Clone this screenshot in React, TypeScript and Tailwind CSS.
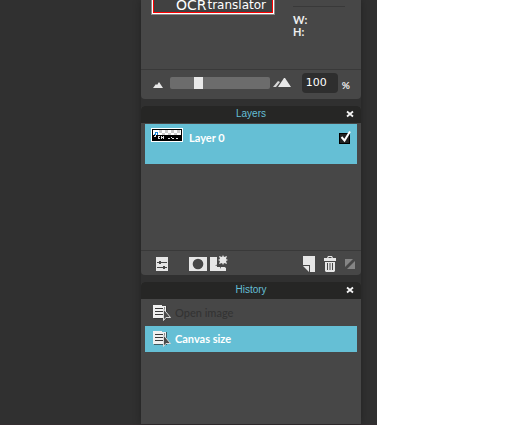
import { useState } from "react";
import type { ReactNode } from "react";

function PanelHeader({ title }: { title: string }) {
  return (
    <header className="flex h-[17px] shrink-0 items-center rounded-t bg-[#262625] pr-1.5 pb-px pl-6">
      <h2 className="flex-1 text-center font-['Liberation_Sans',sans-serif] text-[10px] leading-4 text-[#65bfd5]">
        {title}
      </h2>
      <button type="button" aria-label={`Close ${title}`} className="flex h-4 w-[18px] shrink-0 items-center justify-end pr-px">
        <svg width="8" height="8" viewBox="0 0 8 8" aria-hidden="true">
          <path d="M1 1.500l6 5M7 1.500l-6 5" stroke="#f4f4f4" strokeWidth="1.8" />
        </svg>
      </button>
    </header>
  );
}

function ToolButton({ label, children }: { label: string; children: ReactNode }) {
  return (
    <button type="button" aria-label={label} className="block shrink-0">
      {children}
    </button>
  );
}

function HistoryIcon() {
  return (
    <svg width="18" height="18" viewBox="0 0 18 18" className="shrink-0" aria-hidden="true">
      <path d="M1 2h13v13H1z" fill="#303030" opacity="0.7" />
      <path d="M0 1h9v1h4v12H0z" fill="#f0f0f0" />
      <path d="M11 3h1v11h-1z" fill="#8a8a8a" />
      <path d="M2 4h8v1H2zM2 7h8v1H2zM2 10h8v1H2z" fill="#3a3a3a" />
      <path d="M10.500 5v11.500l2.500-3h4.500z" fill="#4a4a4a" stroke="#d8d8d8" strokeWidth="1" />
    </svg>
  );
}

function Navigator() {
  const [zoom, setZoom] = useState(26);
  const [percent, setPercent] = useState("100");
  return (
    <section aria-label="Navigator" className="rounded-b bg-[#474747]">
      <div className="flex h-[69px] items-start justify-between pr-4 pl-2.5">
        <div className="w-[124px] border border-t-0 border-[#8b8b8b]">
          <div className="border border-t-0 border-white">
            <div className="flex h-[13px] items-start justify-end gap-px border border-t-0 border-[#f00] bg-[#414141] pr-1.5 font-['DejaVu_Sans',sans-serif] text-white">
              <span className="text-[14px] leading-2.5">OCR</span>
              <span className="text-[12px] leading-2.5">translator</span>
            </div>
          </div>
        </div>
        <dl className="mt-1.5 w-[52px] border-t border-[#393939] pt-[7px] text-[11px] leading-3 font-bold text-[#eee]">
          <dt>W:</dt>
          <dt>H:</dt>
        </dl>
      </div>
      <div className="flex h-[30px] items-center border-t border-[#393939] pr-[11px] pb-1 pl-3">
        <svg width="10" height="6" viewBox="0 0 10 6" className="mt-1 shrink-0" aria-hidden="true">
          <path d="M0 6l3-4 1 1 2-3 4 6z" fill="#e8e8e8" />
        </svg>
        <input
          type="range"
          aria-label="Zoom"
          min={0}
          max={100}
          value={zoom}
          onChange={(e) => setZoom(Number(e.target.value))}
          className="ml-[7px] h-3 w-[100px] min-w-0 flex-1 appearance-none rounded-xs bg-[#6c6c6c] [&::-webkit-slider-thumb]:h-3 [&::-webkit-slider-thumb]:w-[9px] [&::-webkit-slider-thumb]:appearance-none [&::-webkit-slider-thumb]:bg-[#e9e9e9]"
        />
        <svg width="18" height="9" viewBox="0 0 18 9" className="ml-[3px] shrink-0" aria-hidden="true">
          <path d="M0 9l5-6 2 1-4 5z" fill="#d8d8d8" />
          <path d="M5 9l6-9h1l6 9z" fill="#e9e9e9" />
        </svg>
        <input
          type="text"
          aria-label="Zoom percent"
          value={percent}
          onChange={(e) => setPercent(e.target.value)}
          className="ml-[11px] h-5 w-9 rounded bg-[#2e2e2e] pl-1 font-['DejaVu_Sans',sans-serif] text-[11px] text-white"
        />
        <span className="mt-1 ml-1 text-[10px] leading-3 font-bold text-[#eee]">%</span>
      </div>
    </section>
  );
}

function LayerThumb() {
  return (
    <svg width="32" height="14" viewBox="0 0 32 14" className="shrink-0" shapeRendering="crispEdges" aria-hidden="true">
      <rect width="32" height="14" fill="#fff" />
      <rect x="1" y="1" width="30" height="12" fill="#000" />
      <rect x="2" y="2" width="28" height="5" fill="#fff" />
      <path d="M8 2h3v3H8zM14 2h3v3h-3zM20 2h3v3h-3zM26 2h3v3h-3zM11 5h3v2h-3zM17 5h3v2h-3zM23 5h3v2h-3z" fill="#ccc" />
      <path d="M4 4h3v3H4z" fill="#fff" />
      <path d="M4 4h3v1H4zM4 5h1v2H4zM6 5h1v2H6zM3 6h1v1H3z" fill="#1583d8" />
      <path d="M3 8h2v1H3zM4 7h1v1H4zM7 8h2v1H7zM7 10h2v1H7zM7 9h1v1H7zM10 8h1v3h-1zM12 8h1v3h-1zM11 9h1v1h-1zM17 10h2v1h-2zM21 10h2v1h-2zM25 10h2v1h-2zM20 9h1v1h-1z" fill="#ddd" />
    </svg>
  );
}

function Layers() {
  const [visible, setVisible] = useState(true);
  return (
    <section aria-label="Layers" className="rounded bg-[#474747]">
      <PanelHeader title="Layers" />
      <div className="h-[127px] px-1 pt-px">
        <div className="flex h-10 items-start bg-[#65bfd5] pt-1 pr-[7px] pl-1.5">
          <LayerThumb />
          <label htmlFor="layer-visible" className="ml-1.5 flex-1 pt-0.5 text-[11px] leading-4 font-bold text-white">
            Layer 0
          </label>
          <span className="relative mt-[5px] h-[11px] w-[11px]">
            <input
              id="layer-visible"
              type="checkbox"
              checked={visible}
              onChange={(e) => setVisible(e.target.checked)}
              className="block h-[11px] w-[11px] appearance-none border border-black bg-[#222]"
            />
            {visible && (
              <svg width="12" height="12" viewBox="0 0 12 12" className="pointer-events-none absolute -top-0.5 left-0" aria-hidden="true">
                <path d="M2.500 6l3 3.500L11 0.500" fill="none" stroke="#fff" strokeWidth="2" />
              </svg>
            )}
          </span>
        </div>
      </div>
      <div className="flex h-[25px] items-center border-t border-[#393939] pt-1 pr-1.5 pb-0.5 pl-[15px] text-[#e6e6e6]">
        <ToolButton label="Layer settings">
          <svg width="12" height="14" viewBox="0 0 12 14" fill="currentColor" aria-hidden="true">
            <path d="M0 0h12v14H0z" />
            <path d="M1 5h10v1H1zM3 4h2v3H3zM1 10h10v1H1zM7 9h2v3H7z" fill="#474747" />
          </svg>
        </ToolButton>
        <span className="w-[21px]" />
        <ToolButton label="Layer mask">
          <svg width="18" height="14" viewBox="0 0 18 14" fill="currentColor" aria-hidden="true">
            <path d="M0 0h18v14H0z" />
            <circle cx="9" cy="7" r="5.300" fill="#474747" />
          </svg>
        </ToolButton>
        <span className="w-[3px]" />
        <ToolButton label="Layer styles">
          <svg width="18" height="16" viewBox="0 0 18 16" fill="currentColor" className="-mt-0.5" aria-hidden="true">
            <path d="M0 2h7v14H0zM7 12h9v4H7z" />
            <path d="M7 2l2 3-2 1 2 2-4 3 5-1v4l2-4 4 3V2z" fill="#474747" />
            <path d="M13 0l1 2 3-1-1 3 2 1-2 1 1 3-3-1-1 2-1-2-3 1 1-3-2-1 2-1-1-3 3 1z" />
          </svg>
        </ToolButton>
        <span className="flex-1" />
        <ToolButton label="New layer">
          <svg width="12" height="16" viewBox="0 0 12 16" fill="currentColor" aria-hidden="true">
            <path d="M0 0h12v16H7V9H0z" />
            <path d="M0 10h6v6z" />
          </svg>
        </ToolButton>
        <span className="w-[9px]" />
        <ToolButton label="Delete layer">
          <svg width="12" height="16" viewBox="0 0 12 16" fill="currentColor" aria-hidden="true">
            <path d="M4 0h4l1 2h3v3H0V2h3zM4.500 1v1h3V1zM1 6h10v9l-1 1H2l-1-1z" fillRule="evenodd" />
            <path d="M3.500 7v7M6 7v7M8.500 7v7" stroke="#474747" strokeWidth="1" />
          </svg>
        </ToolButton>
        <span className="w-[9px]" />
        <svg width="10" height="10" viewBox="0 0 10 10" fill="#858585" className="shrink-0" aria-hidden="true">
          <path d="M0 0h8L0 8zM10 2v8H2z" />
        </svg>
      </div>
    </section>
  );
}

function History() {
  return (
    <section aria-label="History" className="flex flex-1 flex-col rounded-t bg-[#474747]">
      <PanelHeader title="History" />
      <ol className="flex-1 px-1 pt-px text-[11px] leading-4 font-bold">
        <li className="flex h-[26px] items-center gap-1 pl-2 text-[#333]">
          <HistoryIcon />
          <span className="font-medium">Open image</span>
        </li>
        <li className="flex h-[26px] items-center gap-1 bg-[#65bfd5] pl-2 text-white">
          <HistoryIcon />
          <span>Canvas size</span>
        </li>
      </ol>
    </section>
  );
}

export default function App() {
  return (
    <div className="flex min-h-screen bg-white font-['Lato',sans-serif]">
      <main className="flex flex-1 justify-end border-b border-[#342e30] bg-[#303030] pr-4">
        <aside className="flex w-[220px] flex-col gap-[7px] shadow-[0_0_8px_rgba(0,0,0,0.3)]">
          <Navigator />
          <Layers />
          <History />
        </aside>
      </main>
      <div className="w-[153px] shrink-0" />
    </div>
  );
}
